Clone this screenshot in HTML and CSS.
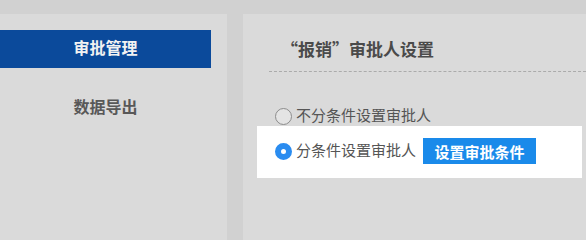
FILE: index.html
```html
<!DOCTYPE html>
<html lang="zh-CN">
<head>
<meta charset="utf-8">
<link rel="stylesheet" href="styles.css">
</head>
<body>
<div class="layout">
  <aside class="sidebar">
    <div class="nav-item active">审批管理</div>
    <div class="nav-item">数据导出</div>
  </aside>
  <main class="main">
    <div class="header"><h2 class="title">“报销”审批人设置</h2></div>
    <div class="option">
      <span class="radio"></span>
      <span class="label">不分条件设置审批人</span>
    </div>
    <div class="option option-selected">
      <span class="radio checked"></span>
      <span class="label">分条件设置审批人</span>
      <button class="btn">设置审批条件</button>
    </div>
  </main>
</div>
</body>
</html>
```
FILE: styles.css
```css
html {
  background: #d1d1d1;
}
html, body {
  margin: 0;
  padding: 0;
}
body {
  background: #d1d1d1;
  width: 586px;
  height: 100vh;
  min-height: 235px;
  overflow: hidden;
  font-family: "Liberation Sans", "Noto Sans CJK SC", sans-serif;
  padding-top: 14px;
  box-sizing: border-box;
  display: flex;
  flex-direction: column;
}
.layout {
  display: flex;
  gap: 16px;
  flex: 1;
}
.sidebar {
  width: 227px;
  flex: none;
  background: #dadada;
  padding-top: 16px;
  box-sizing: border-box;
}
.nav-item {
  width: 211px;
  height: 38px;
  line-height: 38px;
  text-align: center;
  font-size: 16px;
  font-weight: bold;
  color: #585858;
  margin-top: 21px;
}
.nav-item.active {
  margin-top: 0;
  background: #0b4a9b;
  color: #f2f2f2;
}
.main {
  flex: 1;
  background: #dadada;
  display: flex;
  flex-direction: column;
}
.header {
  margin-left: 26px;
  padding: 22px 0 10px 12px;
  border-bottom: 1px dashed #ababab;
}
.title {
  margin: 0;
  font-family: "Noto Sans CJK SC", sans-serif;
  font-size: 17px;
  line-height: 25px;
  font-weight: bold;
  color: #4a4a4a;
}
.option {
  display: flex;
  align-items: center;
  height: 20px;
  margin-top: 34px;
  padding-left: 32px;
  font-size: 15px;
  color: #555;
}
.option-selected {
  margin: 0 4px 0 14px;
  padding: 12px 0 14px 18px;
  height: 26px;
  background: #ffffff;
}
.radio {
  width: 17px;
  height: 17px;
  box-sizing: border-box;
  border-radius: 50%;
  border: 1px solid #8c8c8c;
  background: #e4e4e4;
  flex: none;
  margin-right: 4px;
}
.radio.checked {
  border: 6px solid #2a8cf0;
  background: #ffffff;
}
.label {
  line-height: 20px;
}
.btn {
  margin-left: 7px;
  width: 113px;
  height: 26px;
  border: 0;
  padding: 0;
  background: #1a8aea;
  color: #fff;
  font-family: inherit;
  font-size: 15px;
  font-weight: bold;
}
```
